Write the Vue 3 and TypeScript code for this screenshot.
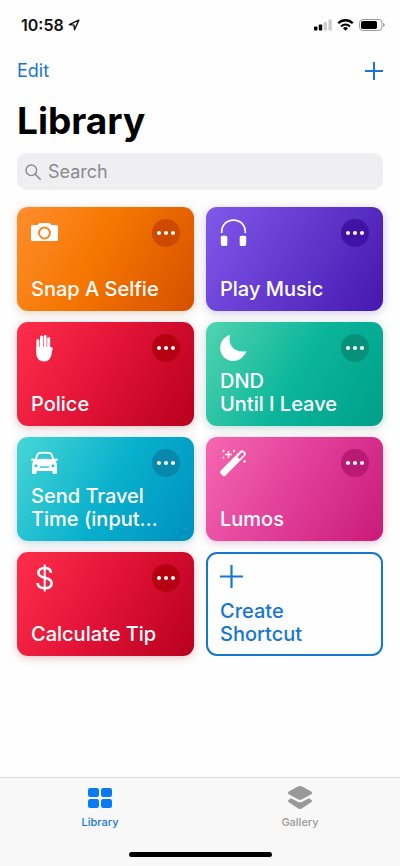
<script setup lang="ts">
import { ref } from 'vue'

type Glyph = 'camera' | 'headphones' | 'hand' | 'moon' | 'car' | 'wand' | 'dollar'

interface Shortcut {
  lines: string[]
  glyph: Glyph
  theme: string
}

const query = ref('')

const shortcuts: Shortcut[] = [
  { lines: ['Snap A Selfie'], glyph: 'camera', theme: 'orange' },
  { lines: ['Play Music'], glyph: 'headphones', theme: 'purple' },
  { lines: ['Police'], glyph: 'hand', theme: 'red' },
  { lines: ['DND', 'Until I Leave'], glyph: 'moon', theme: 'green' },
  { lines: ['Send Travel', 'Time (input…'], glyph: 'car', theme: 'blue' },
  { lines: ['Lumos'], glyph: 'wand', theme: 'pink' },
  { lines: ['Calculate Tip'], glyph: 'dollar', theme: 'red' },
]
</script>

<template>
  <div class="screen">
    <div class="status">
      <div class="clock">
        <span>10:58</span>
        <svg width="12" height="12" viewBox="0 0 12 12" aria-hidden="true">
          <path d="M10.8 1.2 1.3 5.6 6 6.1 6.5 10.8Z" fill="none" stroke="#111" stroke-width="1.4" stroke-linejoin="round" />
        </svg>
      </div>
      <div class="signals">
        <svg width="18" height="12" viewBox="0 0 18 12" aria-hidden="true">
          <rect x="0" y="7.5" width="3.4" height="4" rx="0.8" fill="#000" />
          <rect x="4.8" y="5.5" width="3.4" height="6" rx="0.8" fill="#000" />
          <rect x="9.6" y="3" width="3.4" height="8.5" rx="0.8" fill="#ccc" />
          <rect x="14.4" y="0.5" width="3.4" height="11" rx="0.8" fill="#ccc" />
        </svg>
        <svg width="17" height="12" viewBox="0 0 17 12" aria-hidden="true">
          <path d="M1.2 4.3a10.3 10.3 0 0 1 14.6 0" fill="none" stroke="#000" stroke-width="2.3" />
          <path d="M4.1 7.4a6.2 6.2 0 0 1 8.8 0" fill="none" stroke="#000" stroke-width="2.1" />
          <path d="M8.5 11.8 6 9.3a3.6 3.6 0 0 1 5 0Z" fill="#000" />
        </svg>
        <svg width="26" height="12" viewBox="0 0 26 12" aria-hidden="true">
          <rect x="0.5" y="0.5" width="22.5" height="11" rx="3.2" fill="none" stroke="#999" />
          <rect x="2" y="2" width="16" height="8" rx="1.8" fill="#000" />
          <path d="M24.2 4v4c1-.4 1.5-1.1 1.5-2s-.5-1.6-1.5-2Z" fill="#999" />
        </svg>
      </div>
    </div>

    <header class="nav">
      <button type="button" class="edit">Edit</button>
      <button type="button" class="add" aria-label="Add shortcut">
        <svg width="18" height="18" viewBox="0 0 18 18" aria-hidden="true">
          <path d="M9 0v18M0 9h18" stroke="#1676d2" stroke-width="2" />
        </svg>
      </button>
    </header>

    <main class="content">
      <h1>Library</h1>

      <label class="search">
        <svg width="16" height="16" viewBox="0 0 16 16" aria-hidden="true">
          <circle cx="6.3" cy="6.3" r="5.3" fill="none" stroke="#8a8a8f" stroke-width="1.4" />
          <path d="m10.2 10.2 5 5" stroke="#8a8a8f" stroke-width="1.6" stroke-linecap="round" />
        </svg>
        <input v-model="query" type="search" placeholder="Search" aria-label="Search" />
      </label>

      <section class="grid">
        <article v-for="item in shortcuts" :key="item.lines[0]" class="card" :class="item.theme">
          <button type="button" class="run">
            <svg class="glyph" width="28" height="28" viewBox="0 0 28 28" aria-hidden="true">
              <g v-if="item.glyph === 'camera'">
                <path
                  fill="#fff"
                  fill-rule="evenodd"
                  d="M1.500 6H6.500l1.400-1.600Q8.300 4 9 4h9q.700 0 1.100.400L20.500 6h5q1.500 0 1.500 1.500v13q0 1.500-1.500 1.500h-24Q0 22 0 20.500v-13Q0 6 1.500 6ZM13.500 7.600a6.400 6.400 0 1 0 0 12.800 6.400 6.400 0 0 0 0-12.800Zm0 1.900a4.500 4.500 0 1 1 0 9 4.500 4.500 0 0 1 0-9Z"
                />
              </g>
              <g v-else-if="item.glyph === 'headphones'">
                <path d="M1.700 14v-1C1.700 6 6.700 1.200 13.500 1.200S25.300 6 25.300 13v1" fill="none" stroke="#fff" stroke-width="1.700" />
                <path d="M.7 18.300q0-1.500 1.500-1.500h3.600q1.500 0 1.500 1.500v7.200q0 1.500-1.500 1.500H2.700Q1 27 .9 25.300ZM26.300 18.300q0-1.500-1.500-1.500h-3.600q-1.500 0-1.500 1.500v7.200q0 1.500 1.500 1.500h3.100q1.700 0 1.800-1.700Z" fill="#fff" />
              </g>
              <g v-else-if="item.glyph === 'hand'">
                <g fill="none" stroke="#fff" stroke-width="3" stroke-linecap="round">
                  <path d="M6.900 6.500V18M10.500 3v14M14.100 2.200V17M17.700 4.500V18" />
                  <path d="m17.500 20.500 2.800-6" stroke-width="2.900" />
                </g>
                <path d="M5.400 13h13.800l2.300 1.500-.9 5.500c-.7 4.500-3.300 7.400-7.600 7.400-4.900 0-7.600-3.200-7.600-7.900Z" fill="#fff" />
              </g>
              <path
                v-else-if="item.glyph === 'moon'"
                d="M10.200.8C7.300 9.800 13.500 19.500 26.500 17.300 23.800 23.500 19 27 13.200 27 5.800 27 .2 21.300.2 14 .2 7.900 4 2.800 10.200.8Z"
                fill="#fff"
              />
              <g v-else-if="item.glyph === 'car'">
                <path
                  fill="#fff"
                  fill-rule="evenodd"
                  d="m3.500 10.500 2-5.200Q6.400 3.200 8.500 3 13.500 2.300 18.500 3q2.100.2 3 2.300l2 5.200.6-.8q2.100-.5 2.900.6 0 1.500-2 1.700l-.4.300q1.400 1.600 1.400 3.700v7.500q0 1.500-1.500 1.500h-1.500q-1.500 0-1.500-1.500V22h-16v1.500Q5.500 25 4 25H2.500Q1 25 1 23.500V16q0-2.100 1.400-3.700L2 12Q0 11.800 0 10.300q.8-1.100 2.900-.6Zm2.300-.3q7.700-1 15.400 0L19.500 5.800Q19.200 5 18.300 4.900q-4.800-.6-9.600 0-.9.100-1.200.9ZM5 15.200a1.600 1.600 0 1 0 0 3.200 1.600 1.600 0 0 0 0-3.200Zm17 0a1.600 1.600 0 1 0 0 3.200 1.600 1.600 0 0 0 0-3.200ZM9.500 17.200q-.8 0-.8.800t.8.800h8q.8 0 .8-.8t-.8-.8Z"
                />
              </g>
              <g v-else-if="item.glyph === 'wand'">
                <path
                  fill="#fff"
                  fill-rule="evenodd"
                  d="M.4 22 20.200 2q1.800-1.600 3.600 0l1.300 1.300q1.700 1.700 0 3.500L5.300 26.800q-1.200 1-2.400 0L.4 24.300q-1-1.100 0-2.300ZM17.500 8l2 2 4.300-4.300q.6-.6 0-1.200l-.900-.900q-.6-.6-1.200 0Z"
                />
                <path d="M8.500 2v7M5 5.500h7" stroke="#fff" stroke-width="1.500" />
                <path d="m3.500 .6 1.400 1.400-1.400 1.400-1.400-1.400ZM14 .6l1.300 1.300L14 3.200l-1.300-1.300ZM3.500 7.600l1.100 1.100-1.100 1.100-1.100-1.100ZM24.500 11l1.500 1.500-1.500 1.500-1.500-1.500Z" fill="#fff" />
              </g>
              <g v-else fill="none" stroke="#fff">
                <path d="M20 8.800C19.700 5.800 17.200 4 13.700 4 10 4 7.400 5.900 7.400 8.800c0 3 2.400 4.100 6.300 5 4.300.9 6.900 2.200 6.900 5.500 0 3.200-2.800 5-6.900 5-4 0-6.800-1.900-7.100-5.300" stroke-width="2.600" />
                <path d="M13.700 .5v27" stroke-width="2" />
              </g>
            </svg>
            <span class="name">
              <span v-for="line in item.lines" :key="line">{{ line }}</span>
            </span>
          </button>
          <button type="button" class="more" :aria-label="`Edit ${item.lines.join(' ')}`">
            <i></i><i></i><i></i>
          </button>
        </article>

        <button type="button" class="run create">
          <svg class="glyph" width="28" height="28" viewBox="0 0 28 28" aria-hidden="true">
            <path d="M11.500 1v23M0 12.500h23" stroke="#1676d2" stroke-width="2.200" />
          </svg>
          <span class="name"><span>Create</span><span>Shortcut</span></span>
        </button>
      </section>
    </main>

    <footer class="bottom">
      <nav class="tabs">
        <a href="#library" class="tab active" aria-current="page">
          <svg width="26" height="26" viewBox="0 0 26 26" aria-hidden="true">
            <g fill="#0a7af0">
              <rect x="1" y="3" width="11" height="9" rx="2.200" />
              <rect x="14" y="3" width="11" height="9" rx="2.200" />
              <rect x="1" y="14" width="11" height="9" rx="2.200" />
              <rect x="14" y="14" width="11" height="9" rx="2.200" />
            </g>
          </svg>
          <span>Library</span>
        </a>
        <a href="#gallery" class="tab">
          <svg width="26" height="26" viewBox="0 0 26 26" aria-hidden="true">
            <g fill="#999">
              <path d="M11.300 1.300Q13 .6 14.700 1.300L23.900 6.300Q26.100 8 23.900 9.500L14.700 14.400Q13 15.200 11.300 14.400L2.100 9.500Q-.1 8 2.100 6.300Z" />
              <path d="M4 13.300 10.700 16.700Q13 17.700 15.300 16.700L22 13.300 23.900 14.500Q26 16 23.900 17.600L14.700 23.600Q13 24.600 11.300 23.600L2.100 17.600Q0 16 2.100 14.500Z" />
            </g>
          </svg>
          <span>Gallery</span>
        </a>
      </nav>
      <div class="home"></div>
    </footer>
  </div>
</template>

<style>
body {
  background: #fefefe;
}
</style>

<style scoped>
.screen {
  display: flex;
  flex-direction: column;
  min-height: 100vh;
  background: #fefefe;
  color: #000;
  font-family: Inter, 'Liberation Sans', sans-serif;
}

button {
  margin: 0;
  padding: 0;
  border: 0;
  background: none;
  color: inherit;
  font: inherit;
  text-align: left;
  cursor: pointer;
}

svg {
  display: block;
  flex: none;
}

.status {
  display: flex;
  align-items: center;
  justify-content: space-between;
  height: 49px;
  padding: 0 15px 0 21px;
}

.clock {
  display: flex;
  align-items: center;
  gap: 4px;
  color: #111;
  font-size: 16px;
  font-weight: 600;
}

.signals {
  display: flex;
  align-items: center;
  gap: 5px;
}

.nav {
  display: flex;
  align-items: center;
  justify-content: space-between;
  height: 43px;
  padding: 0 17px;
}

.edit {
  color: #1676d2;
  font-size: 18px;
}

.content {
  display: flex;
  flex-direction: column;
  padding: 5px 17px 24px;
}

h1 {
  margin: 0;
  font-size: 37px;
  font-weight: 700;
  line-height: 48px;
}

.search {
  display: flex;
  align-items: center;
  gap: 7px;
  height: 37px;
  margin-top: 8px;
  padding: 0 8px;
  border-radius: 10px;
  background: #efeff1;
}

.search input {
  flex: 1;
  min-width: 0;
  padding: 0;
  border: 0;
  outline: 0;
  background: none;
  font: inherit;
  font-size: 18px;
}

.search input::placeholder {
  color: #8a8a8f;
  opacity: 1;
}

.grid {
  display: grid;
  grid-template-columns: 1fr 1fr;
  grid-auto-rows: minmax(104px, auto);
  gap: 11px 12px;
  margin-top: 17px;
}

.card {
  position: relative;
  display: flex;
  border-radius: 11px;
  color: #fff;
}

.run {
  display: flex;
  flex: 1;
  flex-direction: column;
  justify-content: space-between;
  padding: 12px 14px 10px;
  border-radius: 11px;
}

.name {
  display: flex;
  flex-direction: column;
  font-size: 20px;
  font-weight: 500;
  line-height: 23px;
  white-space: nowrap;
}

.more {
  position: absolute;
  top: 12px;
  right: 14px;
  display: flex;
  align-items: center;
  justify-content: center;
  gap: 3px;
  width: 28px;
  height: 28px;
  border-radius: 50%;
}

.more i {
  width: 4px;
  height: 4px;
  border-radius: 50%;
  background: #fff;
}

.orange {
  background: linear-gradient(120deg, #ff8e2e, #f57600 45%, #d65000);
  box-shadow: 0 2px 8px rgba(160, 80, 20, 0.25);
}
.orange .more {
  background: #cd4a00;
}

.purple {
  background: linear-gradient(120deg, #8058ea, #6238cc 50%, #4518b0);
  box-shadow: 0 2px 8px rgba(60, 40, 160, 0.25);
}
.purple .more {
  background: #4212a4;
}

.red {
  background: linear-gradient(120deg, #ff2e4b, #e01236 50%, #b8001e);
  box-shadow: 0 2px 8px rgba(150, 20, 40, 0.25);
}
.red .more {
  background: #b50012;
}

.green {
  background: linear-gradient(120deg, #52d4b0, #0ab59a 52%, #009f8a);
  box-shadow: 0 2px 8px rgba(20, 110, 90, 0.25);
}
.green .more {
  background: #07917a;
}

.blue {
  background: linear-gradient(120deg, #48d6d6, #08b0cc 52%, #0090c0);
  box-shadow: 0 2px 8px rgba(20, 100, 130, 0.25);
}
.blue .more {
  background: #0888ac;
}

.pink {
  background: linear-gradient(120deg, #f668b0, #e03c98 52%, #ca1a78);
  box-shadow: 0 2px 8px rgba(150, 30, 100, 0.25);
}
.pink .more {
  background: #b91a74;
}

.create {
  padding: 10px 12px 8px;
  border: 2px solid #1676d2;
  color: #1676d2;
}

.bottom {
  display: flex;
  flex-direction: column;
  align-items: center;
  margin-top: auto;
  padding-bottom: 9px;
  border-top: 1px solid #dcdcdc;
  background: #f8f8f8;
}

.tabs {
  display: flex;
  align-self: stretch;
  height: 74px;
}

.tab {
  display: flex;
  flex: 1;
  flex-direction: column;
  align-items: center;
  gap: 4px;
  padding-top: 7px;
  color: #999;
  font-size: 11px;
  font-weight: 500;
  line-height: 14px;
  text-decoration: none;
}

.active {
  color: #1676d2;
}

.home {
  width: 143px;
  height: 5px;
  border-radius: 3px;
  background: #000;
}
</style>
